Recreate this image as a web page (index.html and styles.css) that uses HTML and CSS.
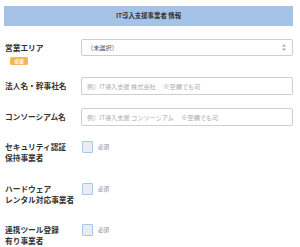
FILE: index.html
```html
<!DOCTYPE html>
<html lang="ja">
<head>
<meta charset="utf-8">
<link rel="stylesheet" href="styles.css">
</head>
<body>
<div class="panel">
  <div class="heading">IT導入支援事業者 情報</div>

  <div class="row row-area">
    <div class="label-col">
      <div class="label label-single">営業エリア</div>
      <div class="badge">必須</div>
    </div>
    <div class="control select">
      <span class="select-text">（未選択）</span>
      <svg class="arrows" width="4" height="7" viewBox="0 0 4 7"><path d="M2 0 L4 2.6 L0 2.6 Z M2 7 L4 4.4 L0 4.4 Z" fill="#aaa"/></svg>
    </div>
  </div>

  <div class="row row-input first-input">
    <div class="label-col"><div class="label label-single">法人名・幹事社名</div></div>
    <div class="control input"><span class="ph">例）IT導入支援 株式会社　 ※空欄でも可</span></div>
  </div>

  <div class="row row-input second-input">
    <div class="label-col"><div class="label label-single">コンソーシアム名</div></div>
    <div class="control input"><span class="ph">例）IT導入支援 コンソーシアム　 ※空欄でも可</span></div>
  </div>

  <div class="row row-check check-1">
    <div class="label-col"><div class="label label-double">セキュリティ認証<br>保持事業者</div></div>
    <div class="check-wrap"><span class="checkbox"></span><span class="req">必須</span></div>
  </div>

  <div class="row row-check check-2">
    <div class="label-col"><div class="label label-double">ハードウェア<br>レンタル対応事業者</div></div>
    <div class="check-wrap"><span class="checkbox"></span><span class="req">必須</span></div>
  </div>

  <div class="row row-check check-3">
    <div class="label-col"><div class="label label-double">連携ツール登録<br>有り事業者</div></div>
    <div class="check-wrap"><span class="checkbox"></span><span class="req">必須</span></div>
  </div>
</div>
</body>
</html>
```

FILE: styles.css
```css
html, body {
  margin: 0;
  padding: 0;
  background: #ffffff;
}
body {
  font-family: "Noto Sans CJK JP", "Noto Sans", sans-serif;
  font-size: 8px;
  color: #333333;
  width: 300px;
  height: 247px;
  overflow: hidden;
}
.panel {
  padding: 6px 7px 0 4px;
}
.heading {
  height: 20px;
  line-height: 20px;
  background: #a5c3e7;
  text-align: center;
  font-size: 6.4px;
  font-weight: 700;
  color: #333;
}
.row {
  display: flex;
  align-items: flex-start;
}
.label-col {
  width: 76px;
  flex: none;
  padding-left: 1px;
}
.label {
  font-size: 7.7px;
  font-weight: 700;
  color: #333;
  white-space: nowrap;
}
.row-area { margin-top: 13px; }
.row-area .label-single { line-height: 17px; }
.badge {
  margin: 1px 0 0 5px;
  width: 18px;
  height: 8px;
  line-height: 8px;
  background: #f4b65a;
  color: #fff;
  font-size: 4.6px;
  font-weight: 700;
  text-align: center;
  border-radius: 1.5px;
}
.control {
  flex: 1;
  box-sizing: border-box;
  border: 1px solid #cfcfcf;
  border-radius: 2px;
  display: flex;
  align-items: center;
  background: #fff;
}
.select {
  height: 17px;
  padding: 0 6px 0 5px;
}
.select-text {
  flex: 1;
  font-size: 6.2px;
  color: #555;
}
.arrows { flex: none; }
.row-input .label-single { line-height: 18px; }
.input {
  height: 18px;
  padding-left: 5px;
}
.ph {
  font-size: 6.2px;
  color: #aaaaaa;
  white-space: pre;
}
.first-input { margin-top: 12px; }
.second-input { margin-top: 13px; }
.label-double { line-height: 11px; }
.check-wrap {
  display: flex;
  align-items: center;
  height: 12px;
}
.checkbox {
  width: 11px;
  height: 12px;
  box-sizing: border-box;
  border: 1px solid #a9c4ee;
  background: #ececec;
  border-radius: 1px;
  margin-left: 1px;
}
.req {
  margin-left: 5px;
  font-size: 5.6px;
  color: #888;
}
.check-1 { margin-top: 15px; }
.check-2 { margin-top: 20px; }
.check-3 { margin-top: 19px; }
```
